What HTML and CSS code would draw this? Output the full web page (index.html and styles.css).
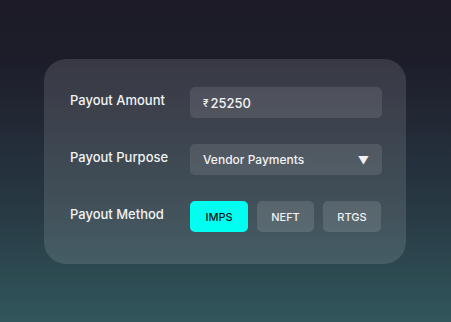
FILE: index.html
```html
<!DOCTYPE html>
<html lang="en">
<head>
  <meta charset="UTF-8" />
  <meta name="viewport" content="width=device-width, initial-scale=1.0" />
  <title>Payout</title>
  <link rel="stylesheet" href="styles.css">
</head>
<body>
  <div class="payout-card">
    <div class="row">
      <label class="label">Payout Amount</label>
      <div class="field amount"><span class="rupee">&#8377;</span>25250</div>
    </div>
    <div class="row">
      <label class="label">Payout Purpose</label>
      <div class="field select">
        <span>Vendor Payments</span>
        <span class="caret">&#9660;</span>
      </div>
    </div>
    <div class="row">
      <label class="label">Payout Method</label>
      <div class="methods">
        <button class="method active">IMPS</button>
        <button class="method">NEFT</button>
        <button class="method">RTGS</button>
      </div>
    </div>
  </div>
</body>
</html>
```

FILE: styles.css
```css
html, body {
  height: 100%;
}
body {
  font-family: 'Inter', sans-serif;
  margin: 0;
  padding: 59px 0 0 44px;
  box-sizing: border-box;
  background: linear-gradient(180deg, #1c1b27 0%, #1d1d2a 18%, #273742 62%, #31565b 100%);
  color: #f2f2f4;
}
.payout-card {
  width: 362px;
  box-sizing: border-box;
  padding: 28px 24px 32px 26px;
  border-radius: 22px;
  background: rgba(255, 255, 255, 0.12);
  display: flex;
  flex-direction: column;
  gap: 26px;
}
.row {
  display: grid;
  grid-template-columns: 120px 192px;
  align-items: center;
  height: 31px;
}
.label {
  font-size: 13px;
  font-weight: 500;
  margin-top: -6px;
}
.field {
  height: 31px;
  box-sizing: border-box;
  border-radius: 5px;
  background: rgba(255, 255, 255, 0.1);
  padding: 0 13px;
  display: flex;
  align-items: center;
  font-size: 13px;
  font-weight: 500;
}
.rupee {
  font-size: 10px;
  margin-right: 2px;
}
.select {
  justify-content: space-between;
  font-size: 12px;
}
.caret {
  font-size: 11px;
}
.methods {
  display: grid;
  grid-template-columns: 58px 57px 58px;
  gap: 9px;
}
.method {
  height: 31px;
  border: none;
  border-radius: 5px;
  background: rgba(255, 255, 255, 0.12);
  color: #f2f2f4;
  font-family: inherit;
  font-size: 11px;
  font-weight: 500;
  padding: 0;
}
.method.active {
  background: #00fff0;
  color: #10131a;
}
```
